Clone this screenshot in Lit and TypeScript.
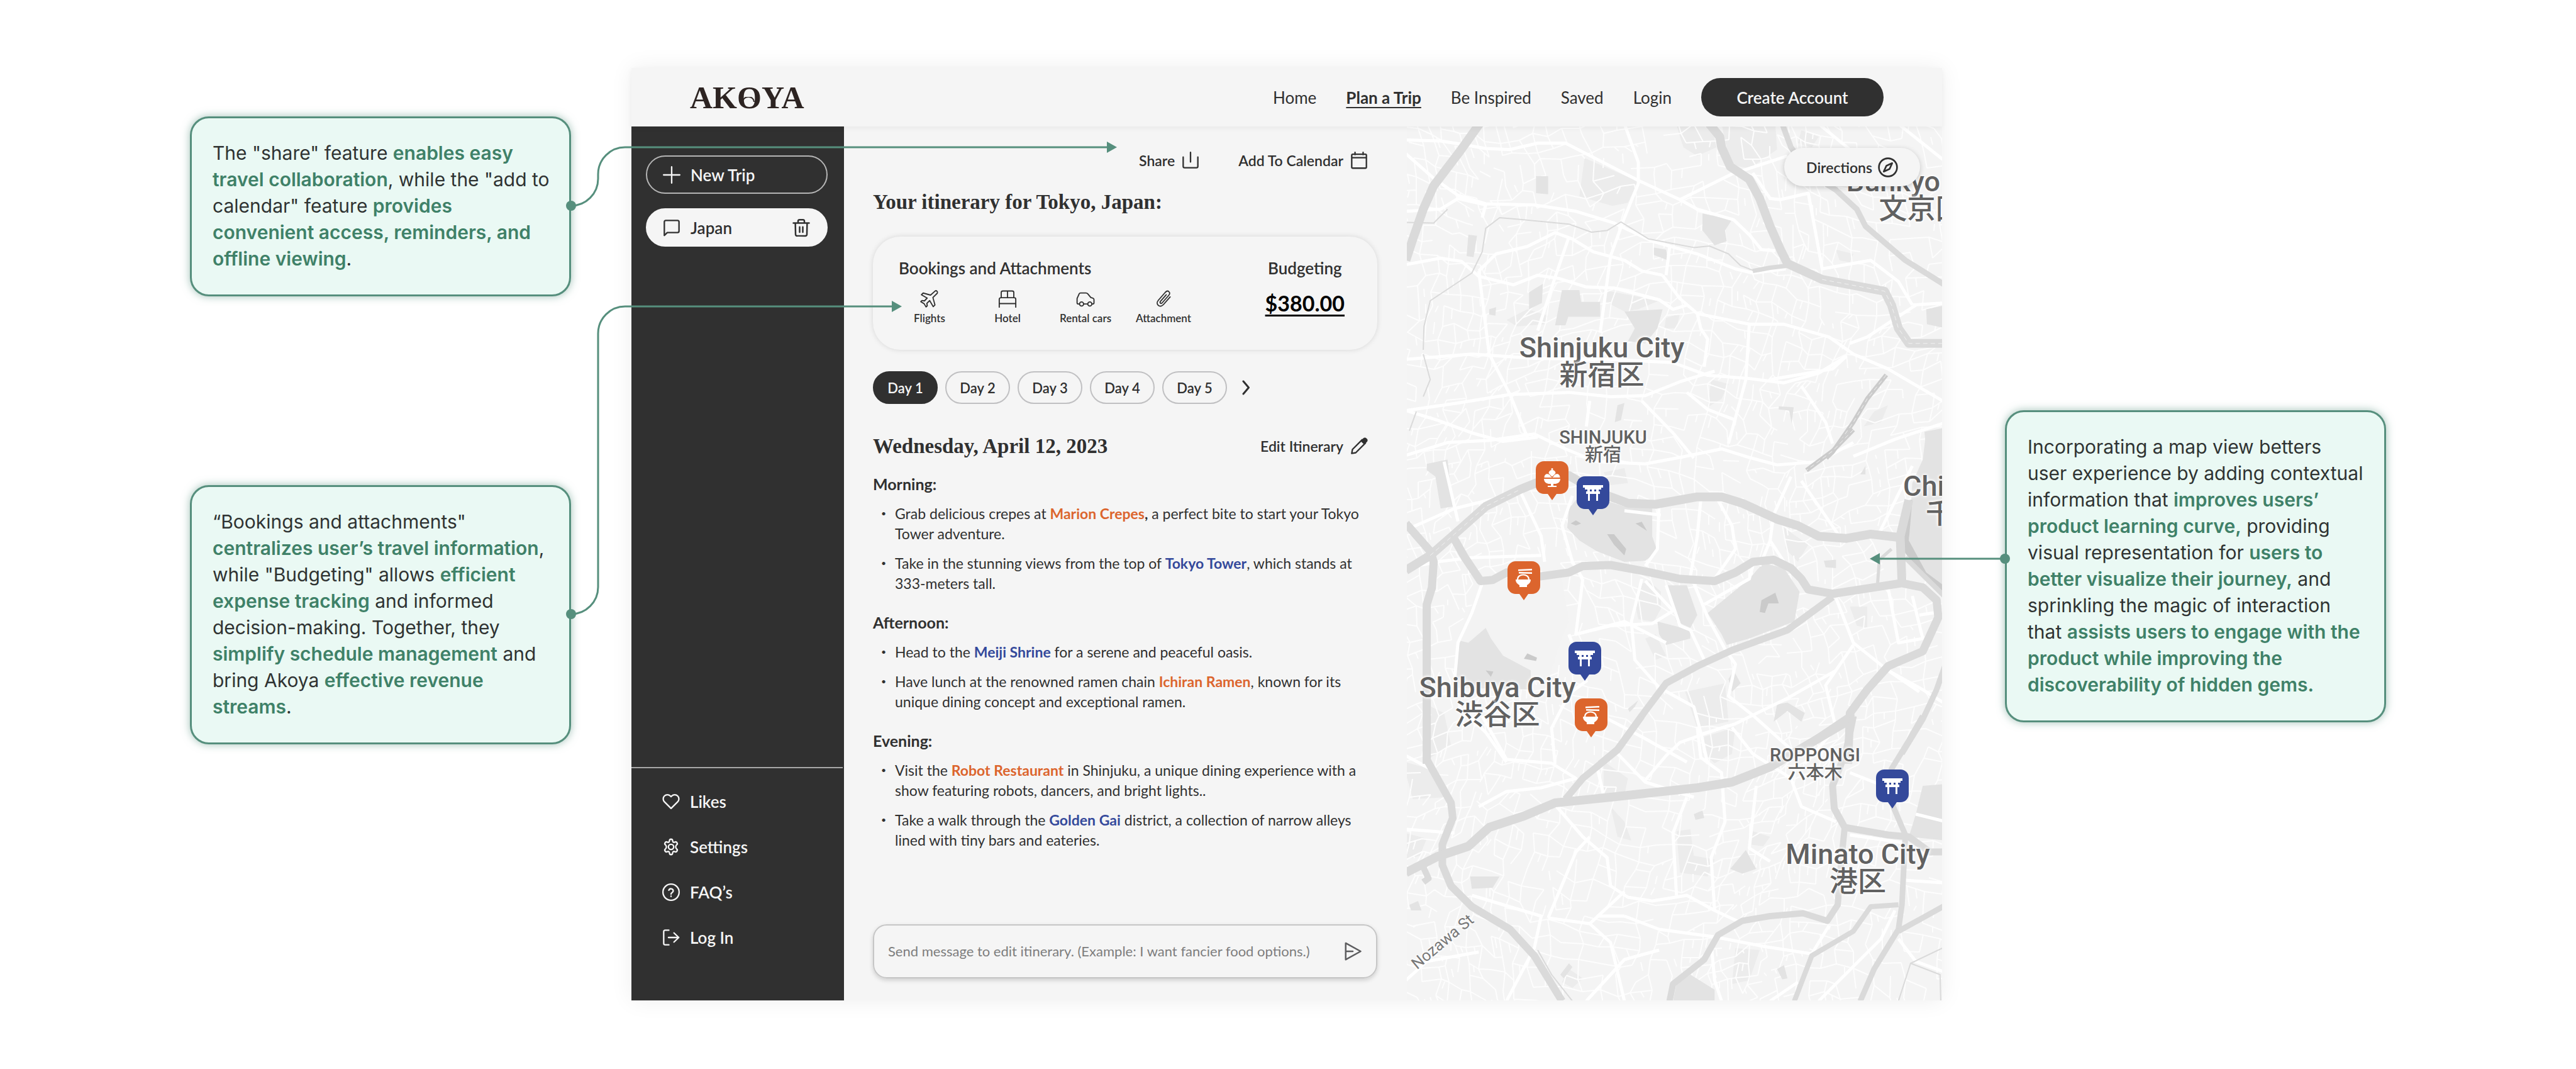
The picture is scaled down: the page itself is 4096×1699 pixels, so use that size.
import { LitElement, html, css, svg, nothing } from "lit";
import { customElement, state } from "lit/decorators.js";
import { classMap } from "lit/directives/class-map.js";

/* ---------- icons ---------- */

const icon = (body: unknown, box = "0 0 24 24", cls = "icon") =>
  html`<svg class=${cls} viewBox=${box} aria-hidden="true">${body}</svg>`;

const ICONS = {
  plus: svg`<path d="M12 1v22M1 12h22" />`,
  chat: svg`<path d="M22 16.500a2 2 0 0 1-2 2H6L2 22.500V4a2 2 0 0 1 2-2h16a2 2 0 0 1 2 2z" />`,
  trash: svg`<path d="M2 6h20M8 6V3.500A1.800 1.800 0 0 1 9.800 1.700h4.400A1.800 1.800 0 0 1 16 3.500V6M4.500 6l.3 14.500a2 2 0 0 0 2 1.800h10.400a2 2 0 0 0 2-1.800L19.500 6M10 11v6.500M14 11v6.500" />`,
  heart: svg`<path d="M21 4.300a5.600 5.600 0 0 0-8 0l-1 1-1-1a5.600 5.600 0 0 0-8 8l9 9 9-9a5.600 5.600 0 0 0 0-8z" />`,
  gear: svg`<circle cx="12" cy="12" r="3.600" /><path d="M9.900 3.600a2.100 2.100 0 0 1 4.200 0c.2 1.900 1.300 2.600 3 1.900a2.200 2.200 0 0 1 3 .8c.7 1.100.4 2.300-.6 3-1.500 1.100-1.500 4.300 0 5.400 1 .7 1.300 1.900.6 3a2.200 2.200 0 0 1-3 .8c-1.700-.7-2.800 0-3 1.900a2.100 2.100 0 0 1-4.200 0c-.2-1.900-1.300-2.600-3-1.900a2.200 2.200 0 0 1-3-.8c-.7-1.100-.4-2.300.6-3 1.500-1.100 1.500-4.300 0-5.400-1-.7-1.300-1.900-.6-3a2.200 2.200 0 0 1 3-.8c1.700.7 2.800 0 3-1.900z" />`,
  help: svg`<circle cx="12" cy="12" r="11" /><path d="M9 9.300a3.100 3.100 0 0 1 6 1c0 2-3 2.500-3 4.200M12 17.200v.6" />`,
  login: svg`<path d="M9 22H4a2 2 0 0 1-2-2V4a2 2 0 0 1 2-2h5M8.500 12H22.500M16 5.800l6.500 6.200-6.500 6.200" />`,
  share: svg`<path d="M12 1v13M2 7.500V20a2 2 0 0 0 2 2h16a2 2 0 0 0 2-2V7.500" />`,
  calendar: svg`<path d="M3.500 3.500h17a1.500 1.500 0 0 1 1.500 1.500v16a1.500 1.500 0 0 1-1.500 1.500h-17A1.500 1.500 0 0 1 2 21V5a1.500 1.500 0 0 1 1.500-1.500zM2 8.300h20M6.500 1v3M17.500 1v3" />`,
  plane: svg`<path d="M19.300 1.900c1.300-.9 3.700 1 2.600 2.900L16.300 10.300l2.600 9.400-2.200 2.200-4.500-7.700-3.600 3.500.5 3.100-1.500 1.500-2.500-4.200-4.200-2.500 1.500-1.500 3.100.5 3.500-3.600L1.700 6.800l2.200-2.200 9.400 2.600z" />`,
  bed: svg`<path d="M1.500 22.500V12.500a2 2 0 0 1 2-2h17a2 2 0 0 1 2 2v10M1.500 18h21M4 10.500V4a2 2 0 0 1 2-2h12a2 2 0 0 1 2 2v6.500M12 2v8.500" />`,
  car: svg`<path d="M4.300 18.500H2.800A1.500 1.500 0 0 1 1.300 17v-5.500L4 5.500a1.800 1.800 0 0 1 1.600-1h7a3 3 0 0 1 2.200 1l4 4.800 2.600.8a2 2 0 0 1 1.400 1.900v4a1.500 1.500 0 0 1-1.500 1.500h-.7M9.600 18.500h5" /><circle cx="7" cy="18.500" r="2.600" /><circle cx="17.500" cy="18.500" r="2.600" />`,
  clip: svg`<path d="M20.500 9.500 12 19.200c-1.900 2.100-4.700 2.800-6.600 1.100-2-1.800-1.700-4.500.2-6.700l8.800-10c1.300-1.400 3.200-1.900 4.500-.7 1.400 1.200 1.200 3-.1 4.500l-8.400 9.600c-.7.8-1.600 1-2.300.4-.7-.6-.6-1.500.1-2.300l7.400-8.400" />`,
  chevron: svg`<path d="M8 2l8.500 10L8 22" />`,
  pencil: svg`<path d="M2 22l1-5.500L16.200 3.300l4.500 4.500L7.500 21z" /><path class="solid" d="M15.400 5 18.500 1.900a1.900 1.900 0 0 1 2.700 0l.9.9a1.900 1.900 0 0 1 0 2.700L19 8.600z" />`,
  compass: svg`<circle cx="12" cy="12" r="10.800" /><path d="M17 7l-3.100 6.900L7 17l3.100-6.900z" />`,
  send: svg`<path d="M3 1.500 22 12 3 22.500zM3.500 12H12" />`,
};

/* ---------- map drawing data ---------- */

type Road = [width: number, points: string];

interface Sheet {
  transform: string;
  parks: string[];
  light: string[];
  minor: string[];
  major: Road[];
  rail: Road[];
}

const SHEETS: Sheet[] = [
  {
    transform: "matrix(.5515 0 0 .3386 -7 -4)",
    parks: [
      "460,780 510,780 515,835 570,835 570,905 478,905 470,945 440,945",
      "640,880 750,870 735,960 700,1030 650,1020 670,960",
      "865,420 950,450 930,500 935,550 900,570 885,540 865,500",
      "385,245 420,245 420,330 385,325",
      "190,520 215,525 205,625 185,620",
      "365,790 405,750 402,840 365,870",
      "1510,870 1568,850 1568,960 1512,940",
      "1085,1325 1128,1330 1122,1405 1115,1345 1085,1340",
      "1505,1445 1568,1425 1568,1568 1512,1568",
      "620,1320 640,1310 630,1390 612,1400",
      "250,870 270,860 268,900 250,895",
      "725,580 760,590 765,640 725,615",
    ],
    light: [
      "525,160 680,270 650,370 605,385 510,340",
      "790,0 890,0 905,110 850,150 810,110 800,60",
      "920,0 1075,0 1080,120 1000,210 945,190",
      "580,780 740,830 680,870 640,880 580,830",
      "300,920 360,870 420,900 410,940 330,950",
      "1150,30 1200,60 1180,110 1140,90",
      "890,1200 940,1220 920,1290 880,1330",
      "760,910 800,890 790,960 755,960",
      "1250,590 1300,610 1290,650 1260,640",
      "1360,1350 1400,1320 1380,1400 1330,1420",
    ],
    minor: [
      "10,75 110,80 170,95 240,115 310,120 390,90 470,90 560,165 680,265 800,355 850,400 955,450 1000,520 1035,590 1075,595",
      "10,140 90,255 160,335 240,375 380,380 500,410 610,465 720,550 850,610 960,680 1010,700 1105,680",
      "800,355 950,235 1110,150",
      "220,690 270,610 360,575 440,510 490,540 550,600 640,640 690,690 750,710",
      "10,660 110,630 170,645 220,715 320,755 390,710 450,725 530,765 610,770 740,825 780,870 820,850",
      "750,710 800,820 850,890 860,960 880,1010 870,1140",
      "640,0 680,180 680,280 640,440 600,620 570,980",
      "220,690 250,1080 310,1270 360,1470",
      "10,1105 200,1080 380,1100 600,1105 780,1120 880,1180 1000,1195 1100,1215 1200,1170 1280,1090",
      "10,1345 160,1310 310,1270 480,1260 600,1280 700,1275 800,1210 900,1160",
      "10,1345 100,1390 200,1450 290,1490 390,1470",
      "480,530 440,720 390,970",
      "850,890 1000,940 1100,940 1230,1000 1300,1080 1400,1150 1568,1310",
      "690,1300 780,1450 840,1568",
      "820,1260 880,1340 960,1390",
      "1000,940 990,1200 940,1500",
      "1010,230 1060,350 1090,355 1170,325 1190,500 1210,680 1350,640 1430,740 1470,850",
      "1470,850 1568,840",
      "1480,850 1340,1000 1290,1030",
      "10,410 110,400 160,350 240,380 230,440",
      "1200,0 1290,120",
      "1430,0 1568,180",
      "770,580 760,710",
      "540,1300 530,1420",
      "1280,1090 1240,1150 1060,1200",
      "1568,1400 1420,1480 1300,1560",
      "1150,1230 1220,1400 1240,1500",
    ],
    major: [
      [14, "222,0 165,130 90,290 60,400 30,540 10,640"],
      [14, "885,0 915,60 920,110 945,200 1000,260 1030,350 1060,480 1090,590 1110,655 1210,730 1390,785 1410,850 1430,960 1460,1030 1568,1030"],
      [9, "1095,0 1120,110 1180,240 1250,310 1310,400 1335,480 1450,640 1568,760"],
      [7, "1010,690 1060,675 1110,665"],
      [2, "10,462 90,465 130,400"],
      [2, "60,1060 62,950 80,830 200,700 230,600 240,490 280,440 350,450 480,470 545,508 590,500 630,460 710,540 840,580 885,573 940,610 975,665 1015,690"],
      [2, "60,1080 80,1200 60,1280"],
      [2, "40,1350 20,1440"],
    ],
    rail: [[7, "1395,1178 1340,1290 1300,1400 1240,1540 1222,1568"]],
  },
  {
    transform: "matrix(.5515 0 0 .3386 -7 482)",
    parks: [
      "500,330 480,370 475,460 510,520 560,570 640,620 700,615 735,570 720,500 720,370 640,360 560,320",
      "1040,625 1100,650 1145,760 1130,900 1000,980 935,1010 920,960 880,860 1000,700",
      "760,730 820,730 850,870 830,930 790,900",
      "735,900 830,940 830,980 760,1010 740,960",
      "165,990 190,1000 240,930 255,980 290,1060 370,1130 370,1220 150,1210",
      "70,160 130,140 145,360 110,370 95,220 70,190",
      "1510,10 1568,0 1568,740 1500,660 1460,520 1470,250 1500,140",
      "1215,615 1250,610 1250,650 1220,645",
      "955,1130 975,1190 950,1230 940,1170",
      "1080,1290 1110,1280 1160,1330 1150,1370 1110,1320 1070,1370",
      "650,1310 680,1270 670,1300 655,1325",
      "1320,210 1335,170 1335,210",
    ],
    light: [
      "680,730 710,710 745,760 745,840 725,900 680,890 670,810",
      "815,1230 930,1190 940,1370 850,1400",
      "630,400 560,420 580,470 640,480",
      "1100,460 1170,540 1140,620 1105,560",
      "1290,830 1340,830 1340,930 1310,920",
      "70,1290 120,1330 140,1480 80,1540",
      "580,200 640,180 650,250 600,260",
      "700,980 730,960 760,1060 730,1080",
    ],
    minor: [
      "10,120 130,60 250,50 380,20 470,90 560,150 700,160 800,130 920,90 1000,130 1080,165 1200,150 1300,60",
      "120,150 160,430",
      "340,290 400,500 410,620",
      "490,310 460,450 490,620 520,700",
      "230,720 200,860 160,1000 150,1180",
      "740,350 735,560 700,640",
      "860,330 850,500 830,690",
      "690,700 660,900 670,1080 740,1210 840,1300 860,1420 880,1568",
      "760,730 800,920 830,940 870,1080",
      "840,720 880,880 930,1030 960,1100 940,1250 1010,1340 1120,1500",
      "1010,640 1000,700 870,820",
      "1120,220 1070,400 1060,520 1030,640",
      "1060,520 1100,620",
      "700,710 780,850 720,910 600,920 500,960",
      "1250,790 1300,1000 1400,1130 1490,1230",
      "1400,740 1430,1000 1500,980 1470,780",
      "10,650 100,620 200,600 400,590",
      "10,470 150,370 250,330 340,290",
      "440,1568 430,1400 480,1240 530,1180 480,960",
      "860,1430 960,1380 1110,1260 1250,1130",
      "560,1330 700,1450 820,1560",
      "1568,850 1490,870",
      "640,380 745,400",
      "910,330 950,450 960,560 900,700",
      "520,700 500,960 640,900 760,1000",
      "1150,240 1260,500",
      "1470,170 1370,500",
      "1160,1568 1250,1400 1220,1200 1300,1010",
      "1568,1290 1500,1220 1400,1130",
      "160,1300 240,1420 300,1560",
    ],
    major: [
      [14, "10,660 80,590 150,490 240,360 340,280 400,240 480,215 560,290 650,345 730,350 850,315 920,315 980,345 1080,420 1140,450 1200,500 1280,510 1350,490 1430,505"],
      [13, "10,440 80,570 90,620 85,740 70,820 70,1000 70,1568"],
      [13, "145,500 180,600 225,710 260,705 300,670 390,690 480,670 520,640 600,635 700,665 800,700 900,710 960,670 1010,620 1070,610 1120,650 1150,700 1170,750 1240,770 1340,745 1440,720 1500,740 1540,800 1545,880 1500,1040 1400,1110 1340,1220 1290,1330 1285,1568"],
      [14, "1460,330 1435,500 1440,710"],
      [8, "1450,600 1568,790"],
      [11, "1240,785 1110,940 950,1035 850,1110 760,1190 700,1320 620,1500 570,1568"],
      [9, "1300,1330 1200,1440 1110,1540"],
      [9, "1568,1090 1540,1220 1500,1360 1440,1520"],
      [5, "1410,560 1375,610 1370,720"],
    ],
    rail: [[7, "1300,0 1240,100 1165,190"]],
  },
  {
    transform: "matrix(.5515 0 0 .3 -7 937)",
    parks: [
      "830,1370 900,1450 900,1510 780,1510 790,1420",
      "990,710 1020,810 980,835 945,810",
      "1500,370 1568,360 1568,660 1460,640 1480,520",
      "195,850 280,850 260,910 200,915",
      "455,1370 480,1310 490,1330 465,1390",
      "20,1000 45,980 55,1030 25,1030",
      "1080,1340 1100,1320 1110,1390 1095,1395",
      "840,520 865,500 870,540 845,550",
    ],
    light: [
      "0,240 100,290 130,430 30,440",
      "580,240 650,330 640,420 580,420",
      "870,110 960,60 950,200 900,250 870,200",
      "790,610 830,600 840,740 900,760 880,850 800,830",
      "960,1230 1030,1240 1000,1400 950,1420",
      "600,480 640,560 660,660 620,640",
      "10,620 70,650 50,740 10,760",
      "480,1340 520,1390 490,1440 460,1410",
      "1010,610 1060,640 1040,690 1000,680",
    ],
    minor: [
      "10,210 90,290",
      "230,0 300,230 430,250 500,330 400,380 300,400 220,480",
      "440,470 520,640 590,750 600,900 650,960 720,980 820,950 900,1030 970,1090",
      "940,50 800,140 760,210 700,340",
      "850,60 860,220 920,300 930,560 890,750 900,1030",
      "420,1070 540,1100 640,930",
      "420,1070 500,720 540,640",
      "200,950 400,1060 380,1230 300,1510",
      "640,1060 740,1130 900,1170 1040,1220 1180,1260 1230,1110",
      "620,200 700,350 840,430",
      "950,60 1010,200 1120,330 1150,480 1250,560",
      "820,430 780,620 790,950",
      "1020,370 1000,700 1060,770",
      "1290,630 1440,670",
      "1450,870 1568,885",
      "1420,1030 1380,1180 1200,1510",
      "1430,1180 1480,1300 1568,1360",
      "890,1200 900,1400 920,1510",
      "530,1510 640,1290 740,1240",
      "640,1510 600,1200 540,1100",
      "10,600 150,620",
      "10,1400 70,1300 220,1250",
      "560,260 580,420",
      "1060,1510 1140,1410",
      "640,1060 560,1060",
      "1290,300 1400,380",
      "1480,520 1568,560",
    ],
    major: [
      [12, "70,0 70,230 140,460 145,540 115,680 115,790 140,900 200,1010 310,1130 380,1270 460,1510"],
      [14, "10,830 100,745 190,690 250,590 350,530 440,460 600,430 850,380 950,350 1060,270 1290,20"],
      [11, "690,0 620,180 520,330 470,440"],
      [11, "1300,0 1280,180 1240,370 1245,490 1275,590 1400,630 1460,640 1520,720 1568,720"],
      [10, "1275,590 1265,770 1255,1000 1225,1085 1155,1045 1060,1060 980,1085 910,1160 870,1290 780,1420 770,1510"],
      [9, "1500,0 1460,130 1410,280 1415,480 1450,630 1440,1000 1430,1130 1360,1340 1320,1510"],
      [8, "1430,1000 1350,1010 1300,1140 1180,1270 1130,1510"],
      [9, "1568,1000 1430,1140"],
      [10, "60,800 75,860 60,880"],
      [2, "390,1240 430,1370 490,1510"],
      [2, "1568,1220 1465,1310 1430,1510"],
      [2, "1465,1310 1550,1370 1552,1510"],
    ],
    rail: [],
  },
];

const PONDS = [
  "1030,855 1035,800 1075,765 1085,815 1055,815 1045,860",
  "590,490 610,490 645,560 640,590 610,540",
  "485,440 500,425 515,440 500,450",
  "350,1075 360,1050 388,1070 385,1085",
  "240,1130 262,1135 255,1160",
  "1462,330 1470,330 1460,520 1510,670 1568,740 1568,780 1480,640 1440,560",
  "672,440 690,432 705,475",
];

/* Side streets: a warped, jittered lattice with some of its edges left out. */
const sideStreets = (() => {
  let seed = 20230412;
  const rnd = () => {
    seed = (seed * 1664525 + 1013904223) >>> 0;
    return seed / 4294967296;
  };
  const step = 23;
  const cols = 42;
  const rows = 66;
  const nodes: [number, number][][] = [];
  for (let r = 0; r < rows; r++) {
    nodes.push([]);
    for (let c = 0; c < cols; c++) {
      const x = c * step - 50;
      const y = r * step - 60;
      nodes[r].push([
        Math.round(x + 34 * Math.sin(y / 120) + 18 * Math.cos(x / 75) + (rnd() - 0.5) * 15),
        Math.round(y + 34 * Math.sin(x / 105 + y / 300) + (rnd() - 0.5) * 15),
      ]);
    }
  }
  let d = "";
  for (let r = 0; r < rows - 1; r++) {
    for (let c = 0; c < cols - 1; c++) {
      const [x, y] = nodes[r][c];
      const [rx, ry] = nodes[r][c + 1];
      const [bx, by] = nodes[r + 1][c];
      if (rnd() < 0.68) d += `M${x} ${y}L${rx} ${ry}`;
      if (rnd() < 0.68) d += `M${x} ${y}L${bx} ${by}`;
      if (rnd() < 0.22) {
        d += `M${(x + rx) >> 1} ${(y + ry) >> 1}L${(bx + rx) >> 1} ${(by + ry) >> 1}`;
      }
    }
  }
  return d;
})();

const LABELS = [
  { x: 310, y: 374, name: "Shinjuku City", local: "新宿区", kind: "city" },
  { x: 144, y: 914, name: "Shibuya City", local: "渋谷区", kind: "city" },
  { x: 717, y: 1179, name: "Minato City", local: "港区", kind: "city" },
  { x: 818, y: 110, name: "Bunkyo City", local: "文京区", kind: "city" },
  { x: 915, y: 594, name: "Chiyoda City", local: "千代田区", kind: "city" },
  { x: 312, y: 508, name: "SHINJUKU", local: "新宿", kind: "area" },
  { x: 649, y: 1013, name: "ROPPONGI", local: "六本木", kind: "area" },
  { x: 57, y: 1296, name: "Nozawa St", local: "", kind: "street" },
];

const torii = svg`<path class="w" d="M10 14h32v4h-3v3H13v-3h-3zM17 21h4v3h-4zM24 21h4v3h-4zM31 21h4v3h-4zM15 24h22v4H15zM18 28h3v11h-3zM31 28h3v11h-3z" />`;
const dessert = svg`<path class="w" d="M13 28h26c0 5-4 8-9 8h-2v3h5v2H19v-2h5v-3h-2c-5 0-9-3-9-8zM13.500 26c0-7 8-7.500 10-2l2.500 2zM38.500 26c0-7-8-7.500-10-2L26 26zM20.500 19a5.500 5 0 0 1 11 0L27 24h-2z" /><circle class="w" cx="26" cy="12.500" r="1.500" />`;
const ramen = svg`<path class="w" d="M13 29h24c0 5-3 7-6 9v3H19v-3c-3-2-6-4-6-9z" /><path class="l" d="M16 29c0-10 18-10 18 0" /><path class="w" d="M17 13l22-1v2.500l-22 1zM18 17l21 .5V20l-21-.5z" />`;

const PINS = [
  { x: 231, y: 532, tone: "food", art: dessert, name: "Marion Crepes" },
  { x: 296, y: 556, tone: "sight", art: torii, name: "Golden Gai" },
  { x: 186, y: 691, tone: "food", art: ramen, name: "Robot Restaurant" },
  { x: 283, y: 819, tone: "sight", art: torii, name: "Meiji Shrine" },
  { x: 293, y: 909, tone: "food", art: ramen, name: "Ichiran Ramen" },
  { x: 772, y: 1022, tone: "sight", art: torii, name: "Tokyo Tower" },
];

const MAP_W = 851;
const MAP_H = 1389;
const at = (x: number, y: number) =>
  `left:${((x / MAP_W) * 100).toFixed(2)}%;top:${((y / MAP_H) * 100).toFixed(2)}%`;

@customElement("trip-map")
export class TripMap extends LitElement {
  static styles = css`
    :host {
      display: block;
      position: relative;
      overflow: hidden;
      background: #f4f4f4;
      font-family: Lato, "Liberation Sans", sans-serif;
    }
    .canvas {
      position: absolute;
      inset: 0;
      width: 100%;
      height: 100%;
      display: block;
    }
    .canvas polyline,
    .canvas .streets {
      fill: none;
      stroke-linejoin: round;
      vector-effect: non-scaling-stroke;
    }
    .streets {
      stroke: #fdfdfd;
      stroke-width: 2;
    }
    .park {
      fill: #e3e3e3;
    }
    .light {
      fill: #ececec;
    }
    .plain {
      fill: #f3f3f3;
    }
    .pond {
      fill: #cacaca;
    }
    .avenue {
      stroke: #ffffff;
      stroke-width: 5;
    }
    .major {
      stroke: #dadada;
    }
    .rail {
      stroke: #cbcbcb;
    }
    .sleepers {
      stroke: #f1f1f1;
      stroke-width: 1;
      stroke-dasharray: 7 5;
    }
    .label {
      position: absolute;
      transform: translate(-50%, -50%);
      display: flex;
      flex-direction: column;
      align-items: center;
      white-space: nowrap;
      color: #616161;
      font-family: Roboto, "Noto Sans CJK JP", sans-serif;
      font-weight: 500;
      font-size: 45px;
      line-height: 44px;
      text-shadow: 0 0 4px #ffffff, 0 0 4px #ffffff, 0 0 6px #ffffff;
    }
    .area {
      font-size: 29px;
      line-height: 28px;
    }
    .street {
      font-size: 25px;
      line-height: 28px;
      font-weight: 400;
      color: #777777;
      transform: translate(-50%, -50%) rotate(-40deg);
    }
    .pin {
      position: absolute;
      width: 52px;
      height: 62px;
      margin-left: -26px;
      padding: 0;
      border: 0;
      background: none;
    }
    .pin svg {
      display: block;
      width: 52px;
      height: 62px;
    }
    .food {
      fill: #dc652d;
    }
    .sight {
      fill: #34499b;
    }
    .w {
      fill: #ffffff;
    }
    .l {
      fill: none;
      stroke: #ffffff;
      stroke-width: 2;
    }
    .directions {
      position: absolute;
      top: 34px;
      right: 35px;
      height: 61px;
      padding: 0 35px;
      display: flex;
      align-items: center;
      gap: 9px;
      border: 0;
      border-radius: 31px;
      background: #f5f5f5;
      box-shadow: 0 2px 8px rgba(0, 0, 0, 0.2);
      color: #303030;
      font: 600 23px/28px Lato, "Liberation Sans", sans-serif;
    }
    .icon {
      width: 32px;
      height: 32px;
      fill: none;
      stroke: #303030;
      stroke-width: 2;
      stroke-linejoin: round;
    }
  `;

  render() {
    return html`
      <svg class="canvas" viewBox="0 0 851 1389" preserveAspectRatio="xMidYMid slice" aria-hidden="true">
        ${SHEETS.map((s) => svg`<g transform=${s.transform}>${s.light.map((p) => svg`<polygon class="light" points=${p} />`)}</g>`)}
        <path class="streets" d=${sideStreets} />
        ${SHEETS.map(
          (s, i) => svg`<g transform=${s.transform}>
            ${i === 1
              ? svg`<polygon class="plain" points="225,730 300,690 460,700 480,900 460,970 420,1180 150,1190 165,960" />`
              : nothing}
            ${s.parks.map((p) => svg`<polygon class="park" points=${p} />`)}
            ${i === 1 ? PONDS.map((p) => svg`<polygon class="pond" points=${p} />`) : nothing}
          </g>`,
        )}
        ${SHEETS.map((s) => svg`<g transform=${s.transform}>${s.minor.map((p) => svg`<polyline class="avenue" points=${p} />`)}</g>`)}
        ${SHEETS.map(
          (s) => svg`<g transform=${s.transform}>
            ${s.major.map(([w, p]) => svg`<polyline class="major" stroke-width=${w} points=${p} />`)}
            ${s.rail.map(
              ([w, p]) => svg`<polyline class="rail" stroke-width=${w} points=${p} /><polyline class="sleepers" points=${p} />`,
            )}
          </g>`,
        )}
        <g transform=${SHEETS[1].transform}><polyline class="sleepers" points="80,590 150,490 240,360 340,280" /></g>
        <g transform=${SHEETS[0].transform}>
          <polyline class="sleepers" points="1210,730 1390,785 1410,850 1430,960 1460,1030 1568,1030" />
        </g>
      </svg>
      ${LABELS.map(
        (l) => html`<div class="label ${l.kind}" style=${at(l.x, l.y)}>
          <span>${l.name}</span>${l.local ? html`<span lang="ja">${l.local}</span>` : nothing}
        </div>`,
      )}
      ${PINS.map(
        (p) => html`<button class="pin" aria-label=${p.name} style=${at(p.x, p.y)}>
          <svg viewBox="0 0 52 62" aria-hidden="true">
            <path class=${p.tone} d="M13 0h26a13 13 0 0 1 13 13v26a13 13 0 0 1-13 13h-6l-7 10-7-10h-6A13 13 0 0 1 0 39V13A13 13 0 0 1 13 0z" />
            ${p.art}
          </svg>
        </button>`,
      )}
      <button class="directions">Directions ${icon(ICONS.compass)}</button>
    `;
  }
}

/* ---------- itinerary data ---------- */

const food = (t: string) => html`<strong class="food">${t}</strong>`;
const sight = (t: string) => html`<strong class="sight">${t}</strong>`;

const PARTS = [
  {
    title: "Morning:",
    items: [
      html`Grab delicious crepes at ${food("Marion Crepes")}<b>,</b> a perfect bite to start your Tokyo<br />Tower adventure.`,
      html`Take in the stunning views from the top of ${sight("Tokyo Tower")}, which stands at<br />333-meters tall.`,
    ],
  },
  {
    title: "Afternoon:",
    items: [
      html`Head to the ${sight("Meiji Shrine")} for a serene and peaceful oasis.`,
      html`Have lunch at the renowned ramen chain ${food("Ichiran Ramen")}, known for its<br />unique dining concept and exceptional ramen.`,
    ],
  },
  {
    title: "Evening:",
    items: [
      html`Visit the ${food("Robot Restaurant")} in Shinjuku, a unique dining experience with a<br />show featuring robots, dancers, and bright lights..`,
      html`Take a walk through the ${sight("Golden Gai")} district, a collection of narrow alleys<br />lined with tiny bars and eateries.`,
    ],
  },
];

const BOOKINGS = [
  { label: "Flights", art: ICONS.plane },
  { label: "Hotel", art: ICONS.bed },
  { label: "Rental cars", art: ICONS.car },
  { label: "Attachment", art: ICONS.clip },
];

const MENU = [
  { label: "Likes", art: ICONS.heart },
  { label: "Settings", art: ICONS.gear },
  { label: "FAQ’s", art: ICONS.help },
  { label: "Log In", art: ICONS.login },
];

const NAV = ["Home", "Plan a Trip", "Be Inspired", "Saved", "Login"];

@customElement("app-root")
export class AppRoot extends LitElement {
  @state() private day = 1;

  static styles = css`
    :host {
      display: block;
      color: #303030;
      font-family: Lato, "Liberation Sans", sans-serif;
    }
    * {
      box-sizing: border-box;
    }
    button {
      margin: 0;
      font: inherit;
      color: inherit;
      background: none;
      border: 0;
      padding: 0;
      cursor: pointer;
    }
    a {
      color: inherit;
      text-decoration: none;
    }
    h1,
    h2,
    h3,
    p,
    ul {
      margin: 0;
      padding: 0;
    }
    .page {
      position: relative;
      min-height: 100vh;
      background: #ffffff;
      display: grid;
      grid-template-columns:
        minmax(0, 606fr) minmax(0, 96fr) minmax(0, 2084fr)
        minmax(0, 100fr) minmax(0, 606fr);
      padding: 108px 302px;
      align-items: start;
    }

    /* callouts */
    .notes {
      display: flex;
      flex-direction: column;
      gap: 300px;
      padding-top: 77px;
    }
    .notes.right {
      grid-column: 5;
      padding-top: 544px;
    }
    .note {
      border: 3px solid #568f7d;
      border-radius: 30px;
      background: #eaf9f4;
      box-shadow: 0 0 14px rgba(86, 143, 125, 0.55);
      padding: 34px 0 36px 33px;
      font: 400 30px/42px Inter, "Liberation Sans", sans-serif;
      color: #2f3332;
      white-space: nowrap;
    }
    .note em {
      font-style: normal;
      font-weight: 600;
      color: #3f8168;
    }
    .links {
      position: absolute;
      inset: 0;
      width: 100%;
      height: 100%;
      pointer-events: none;
      z-index: 2;
    }
    .links path {
      fill: none;
      stroke: #568f7d;
      stroke-width: 3;
    }
    .links .tip,
    .links circle {
      fill: #568f7d;
      stroke: none;
    }

    /* window */
    .window {
      grid-column: 3;
      background: #f5f5f5;
      box-shadow: 0 0 34px rgba(0, 0, 0, 0.07);
    }
    .top {
      position: relative;
      z-index: 1;
      height: 93px;
      padding: 0 93px;
      display: flex;
      align-items: center;
      justify-content: space-between;
      background: #f5f5f5;
      box-shadow: 0 3px 8px rgba(0, 0, 0, 0.05);
    }
    .logo {
      position: relative;
      font: 700 50px/50px "Liberation Serif", serif;
      color: #2d2422;
    }
    .pearl {
      position: absolute;
      left: 83px;
      top: 24px;
      width: 20px;
      height: 10px;
      fill: none;
      stroke: #2d2422;
      stroke-width: 2;
    }
    .nav {
      display: flex;
      align-items: center;
      gap: 47px;
      font-size: 26px;
      line-height: 30px;
    }
    .nav .on {
      font-weight: 700;
      text-decoration: underline;
      text-decoration-thickness: 2px;
      text-underline-offset: 5px;
      text-decoration-skip-ink: none;
    }
    .cta {
      width: 290px;
      height: 61px;
      border-radius: 31px;
      background: #303030;
      color: #f5f5f5;
      font-weight: 600;
    }
    .body {
      display: grid;
      grid-template-columns: 338px minmax(0, 895fr) minmax(0, 851fr);
    }

    .icon {
      flex: none;
      width: 28px;
      height: 28px;
      fill: none;
      stroke: currentColor;
      stroke-width: 2;
      stroke-linecap: round;
      stroke-linejoin: round;
    }
    .solid {
      fill: currentColor;
    }

    /* sidebar */
    .side {
      display: flex;
      flex-direction: column;
      justify-content: space-between;
      background: #303030;
      color: #f5f5f5;
      font-size: 26px;
      font-weight: 600;
      padding: 46px 0 64px;
    }
    .trips {
      display: flex;
      flex-direction: column;
      gap: 23px;
      padding: 0 26px 0 23px;
    }
    .trip {
      height: 61px;
      display: flex;
      align-items: center;
      gap: 16px;
      padding: 0 25px;
      border: 2px solid #b5b5b5;
      border-radius: 31px;
      text-align: left;
    }
    .trip.on {
      background: #f5f5f5;
      color: #303030;
      border-color: #f5f5f5;
    }
    .trip span {
      flex: 1;
    }
    .trip button {
      display: flex;
    }
    .trip button .icon {
      width: 30px;
      height: 32px;
    }
    .menu {
      margin-right: 2px;
      padding-top: 17px;
      border-top: 2px solid #a8a8a8;
      display: flex;
      flex-direction: column;
    }
    .menu a {
      height: 72px;
      display: flex;
      align-items: center;
      gap: 16px;
      padding-left: 49px;
    }

    /* plan */
    .plan {
      display: flex;
      flex-direction: column;
      padding: 38px 47px 35px 46px;
    }
    .tools {
      display: flex;
      justify-content: flex-end;
      gap: 62px;
      padding-right: 15px;
    }
    .tool {
      height: 32px;
      display: flex;
      align-items: center;
      gap: 11px;
      font-size: 23px;
      font-weight: 600;
    }
    .head {
      font: 700 33px/40px "Liberation Serif", serif;
    }
    .title {
      margin-top: 30px;
    }
    .card {
      margin-top: 35px;
      height: 180px;
      padding: 36px 52px 0 28px;
      display: flex;
      justify-content: space-between;
      border-radius: 44px;
      box-shadow: 0 0 9px rgba(0, 0, 0, 0.13);
    }
    .sub {
      font-size: 26px;
      line-height: 28px;
      font-weight: 600;
    }
    .card .indent {
      padding-left: 13px;
    }
    .kinds {
      display: grid;
      grid-template-columns: repeat(4, 124px);
      margin-top: 20px;
    }
    .kind {
      display: flex;
      flex-direction: column;
      align-items: center;
      gap: 6px;
      font-size: 17px;
      line-height: 20px;
      font-weight: 600;
    }
    .kind .icon {
      width: 32px;
      height: 30px;
      stroke-width: 1.5;
    }
    .budget {
      display: flex;
      flex-direction: column;
      align-items: center;
      gap: 22px;
    }
    .price {
      font-size: 34px;
      line-height: 40px;
      font-weight: 700;
      color: #000000;
      text-decoration: underline;
      text-decoration-thickness: 3px;
      text-underline-offset: 5px;
      text-decoration-skip-ink: none;
    }
    .days {
      margin-top: 34px;
      display: flex;
      align-items: center;
      gap: 12px;
    }
    .day {
      width: 103px;
      height: 52px;
      border: 2px solid #c0c0c2;
      border-radius: 26px;
      font-size: 22px;
      font-weight: 600;
    }
    .day.on {
      background: #303030;
      border-color: #303030;
      color: #f5f5f5;
    }
    .next {
      display: flex;
      margin-left: 6px;
    }
    .next .icon {
      width: 24px;
      height: 24px;
      stroke-width: 3;
    }
    .date {
      margin-top: 47px;
      display: flex;
      align-items: center;
      justify-content: space-between;
      padding-right: 15px;
    }
    .parts {
      margin-top: 24px;
      display: flex;
      flex-direction: column;
      gap: 30px;
    }
    .part h3 {
      font-size: 25px;
      line-height: 32px;
      font-weight: 700;
    }
    .list {
      margin-top: 15px;
      display: flex;
      flex-direction: column;
      gap: 15px;
      list-style: none;
      font-size: 23px;
      line-height: 32px;
      white-space: nowrap;
    }
    .list li {
      display: flex;
    }
    .list li::before {
      content: "•";
      box-sizing: border-box;
      width: 35px;
      flex: none;
      padding-left: 13px;
      font-size: 14px;
    }
    .food {
      color: #dc652d;
    }
    .sight {
      color: #34499b;
    }
    .composer {
      margin-top: 118px;
      height: 86px;
      display: flex;
      align-items: center;
      gap: 16px;
      padding: 0 22px;
      border: 2px solid #c6c6c6;
      border-radius: 22px;
      box-shadow: 0 3px 7px rgba(0, 0, 0, 0.16);
    }
    .composer input {
      flex: 1;
      min-width: 0;
      padding: 0;
      border: 0;
      outline: 0;
      background: none;
      font: 400 22px/32px Lato, "Liberation Sans", sans-serif;
      color: #303030;
    }
    .composer input::placeholder {
      color: #7d7d7d;
      opacity: 1;
    }
    .composer button {
      display: flex;
      color: #5c5c5e;
    }
    .composer .icon {
      width: 30px;
      height: 32px;
    }
  `;

  private side() {
    return html`<aside class="side">
      <div class="trips">
        <button class="trip">${icon(ICONS.plus)}<span>New Trip</span></button>
        <div class="trip on">
          ${icon(ICONS.chat)}<span>Japan</span><button aria-label="Delete trip">${icon(ICONS.trash)}</button>
        </div>
      </div>
      <nav class="menu">${MENU.map((m) => html`<a href="#">${icon(m.art)}${m.label}</a>`)}</nav>
    </aside>`;
  }

  private plan() {
    return html`<main class="plan">
      <div class="tools">
        <button class="tool">Share ${icon(ICONS.share)}</button>
        <button class="tool">Add To Calendar ${icon(ICONS.calendar)}</button>
      </div>
      <h1 class="head title">Your itinerary for Tokyo, Japan:</h1>
      <section class="card">
        <div>
          <h2 class="sub indent">Bookings and Attachments</h2>
          <div class="kinds">
            ${BOOKINGS.map((b) => html`<button class="kind">${icon(b.art)}${b.label}</button>`)}
          </div>
        </div>
        <div class="budget">
          <h2 class="sub">Budgeting</h2>
          <a class="price" href="#">$380.00</a>
        </div>
      </section>
      <div class="days">
        ${[1, 2, 3, 4, 5].map(
          (n) => html`<button
            class=${classMap({ day: true, on: n === this.day })}
            aria-pressed=${n === this.day}
            @click=${() => (this.day = n)}
          >
            Day ${n}
          </button>`,
        )}
        <button class="next" aria-label="More days">${icon(ICONS.chevron)}</button>
      </div>
      <div class="date">
        <h2 class="head">Wednesday, April 12, 2023</h2>
        <button class="tool">Edit Itinerary ${icon(ICONS.pencil)}</button>
      </div>
      <div class="parts">
        ${PARTS.map(
          (p) => html`<section class="part">
            <h3>${p.title}</h3>
            <ul class="list">
              ${p.items.map((i) => html`<li><span>${i}</span></li>`)}
            </ul>
          </section>`,
        )}
      </div>
      <form class="composer" @submit=${(e: Event) => e.preventDefault()}>
        <input
          type="text"
          aria-label="Message"
          placeholder="Send message to edit itinerary. (Example: I want fancier food options.)"
        />
        <button aria-label="Send">${icon(ICONS.send)}</button>
      </form>
    </main>`;
  }

  render() {
    return html`<div class="page">
      <div class="notes">
        <p class="note">
          The "share" feature <em>enables easy</em><br /><em>travel collaboration</em>, while the "add to<br />calendar"
          feature <em>provides</em><br /><em>convenient access, reminders, and</em><br /><em>offline viewing</em>.
        </p>
        <p class="note">
          “Bookings and attachments"<br /><em>centralizes user’s travel information</em>,<br />while "Budgeting" allows
          <em>efficient</em><br /><em>expense tracking</em> and informed<br />decision-making. Together, they<br /><em
            >simplify schedule management</em
          >
          and<br />bring Akoya <em>effective revenue</em><br /><em>streams</em>.
        </p>
      </div>

      <div class="window">
        <header class="top">
          <span class="logo"
            >AKOYA<svg class="pearl" viewBox="0 0 20 10" aria-hidden="true"><path d="M1 8a9 8 0 0 1 18 0" /></svg
          ></span>
          <nav class="nav">
            ${NAV.map((n) => html`<a href="#" class=${classMap({ on: n === "Plan a Trip" })}>${n}</a>`)}
            <button class="cta">Create Account</button>
          </nav>
        </header>
        <div class="body">${this.side()}${this.plan()}<trip-map></trip-map></div>
      </div>

      <div class="notes right">
        <p class="note">
          Incorporating a map view betters<br />user experience by adding contextual<br />information that
          <em>improves users’</em><br /><em>product learning curve,</em> providing<br />visual representation for
          <em>users to</em><br /><em>better visualize their journey,</em> and<br />sprinkling the magic of
          interaction<br />that <em>assists users to engage with the</em><br /><em>product while improving the</em
          ><br /><em>discoverability of hidden gems.</em>
        </p>
      </div>

      <svg class="links" viewBox="0 0 4096 1699" preserveAspectRatio="xMidYMin meet" aria-hidden="true">
        <path d="M908 327A43 43 0 0 0 951 284V277A43 43 0 0 1 994 234H1762" />
        <path class="tip" d="M1760 225l16 9-16 9z" />
        <circle cx="908" cy="327" r="8" />
        <path d="M908 976A43 43 0 0 0 951 933V530A43 43 0 0 1 994 487H1420" />
        <path class="tip" d="M1418 478l16 9-16 9z" />
        <circle cx="908" cy="976" r="8" />
        <path d="M3188 888H2988" />
        <path class="tip" d="M2989 879l-16 9 16 9z" />
        <circle cx="3188" cy="888" r="8" />
      </svg>
    </div>`;
  }
}
